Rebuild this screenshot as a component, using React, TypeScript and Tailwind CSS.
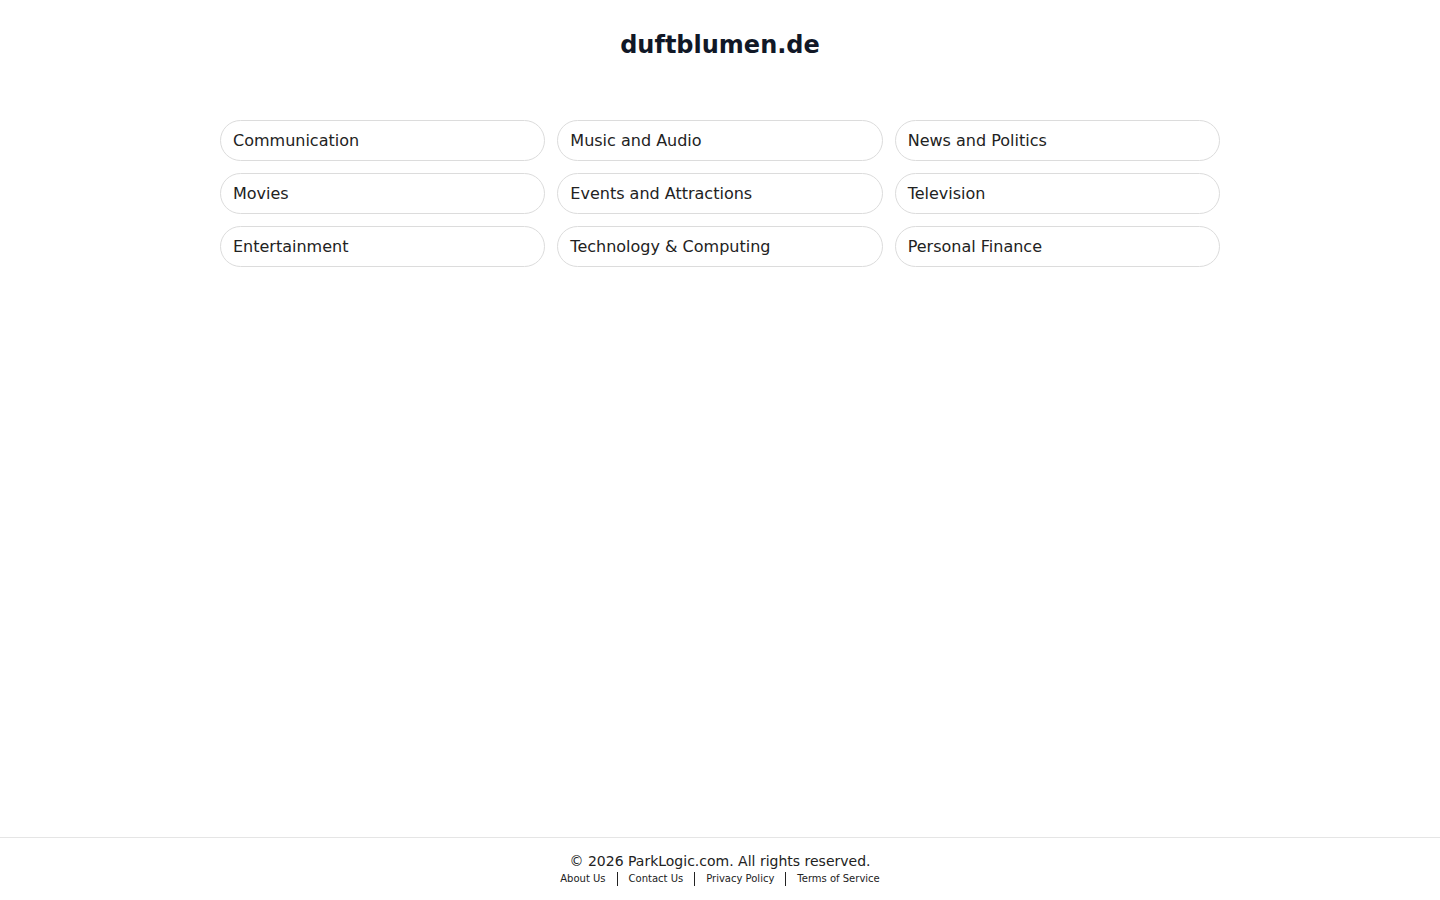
const CATEGORIES = [
  "Communication",
  "Music and Audio",
  "News and Politics",
  "Movies",
  "Events and Attractions",
  "Television",
  "Entertainment",
  "Technology & Computing",
  "Personal Finance",
];

const LINKS = ["About Us", "Contact Us", "Privacy Policy", "Terms of Service"];

export default function App() {
  return (
    <div className="flex min-h-screen flex-col bg-white font-['DejaVu_Sans',sans-serif] text-[#1f2937]">
      <main className="flex-1">
        <h1 className="pt-[29px] text-center text-2xl font-bold leading-8 text-[#111827]">
          duftblumen.de
        </h1>
        <div className="mx-auto mt-[59px] grid w-[1000px] grid-cols-3 gap-x-3 gap-y-3">
          {CATEGORIES.map((c) => (
            <a
              key={c}
              href="#"
              className="flex h-[41px] items-center rounded-full border border-[#dcdcdc] px-3 text-base text-[#222]"
            >
              {c}
            </a>
          ))}
        </div>
      </main>

      <footer className="h-[63px] border-t border-[#e5e5e5] pt-[15px] text-center">
        <p className="text-sm leading-4 text-[#222]">© 2026 ParkLogic.com. All rights reserved.</p>
        <div className="mt-[3px] flex items-center justify-center text-[10px] leading-3 text-[#222]">
          {LINKS.map((l, i) => (
            <span key={l} className="flex items-center">
              {i > 0 && <span className="mx-[11px] h-[14px] w-px bg-[#222]" />}
              <a href="#">{l}</a>
            </span>
          ))}
        </div>
      </footer>
    </div>
  );
}
